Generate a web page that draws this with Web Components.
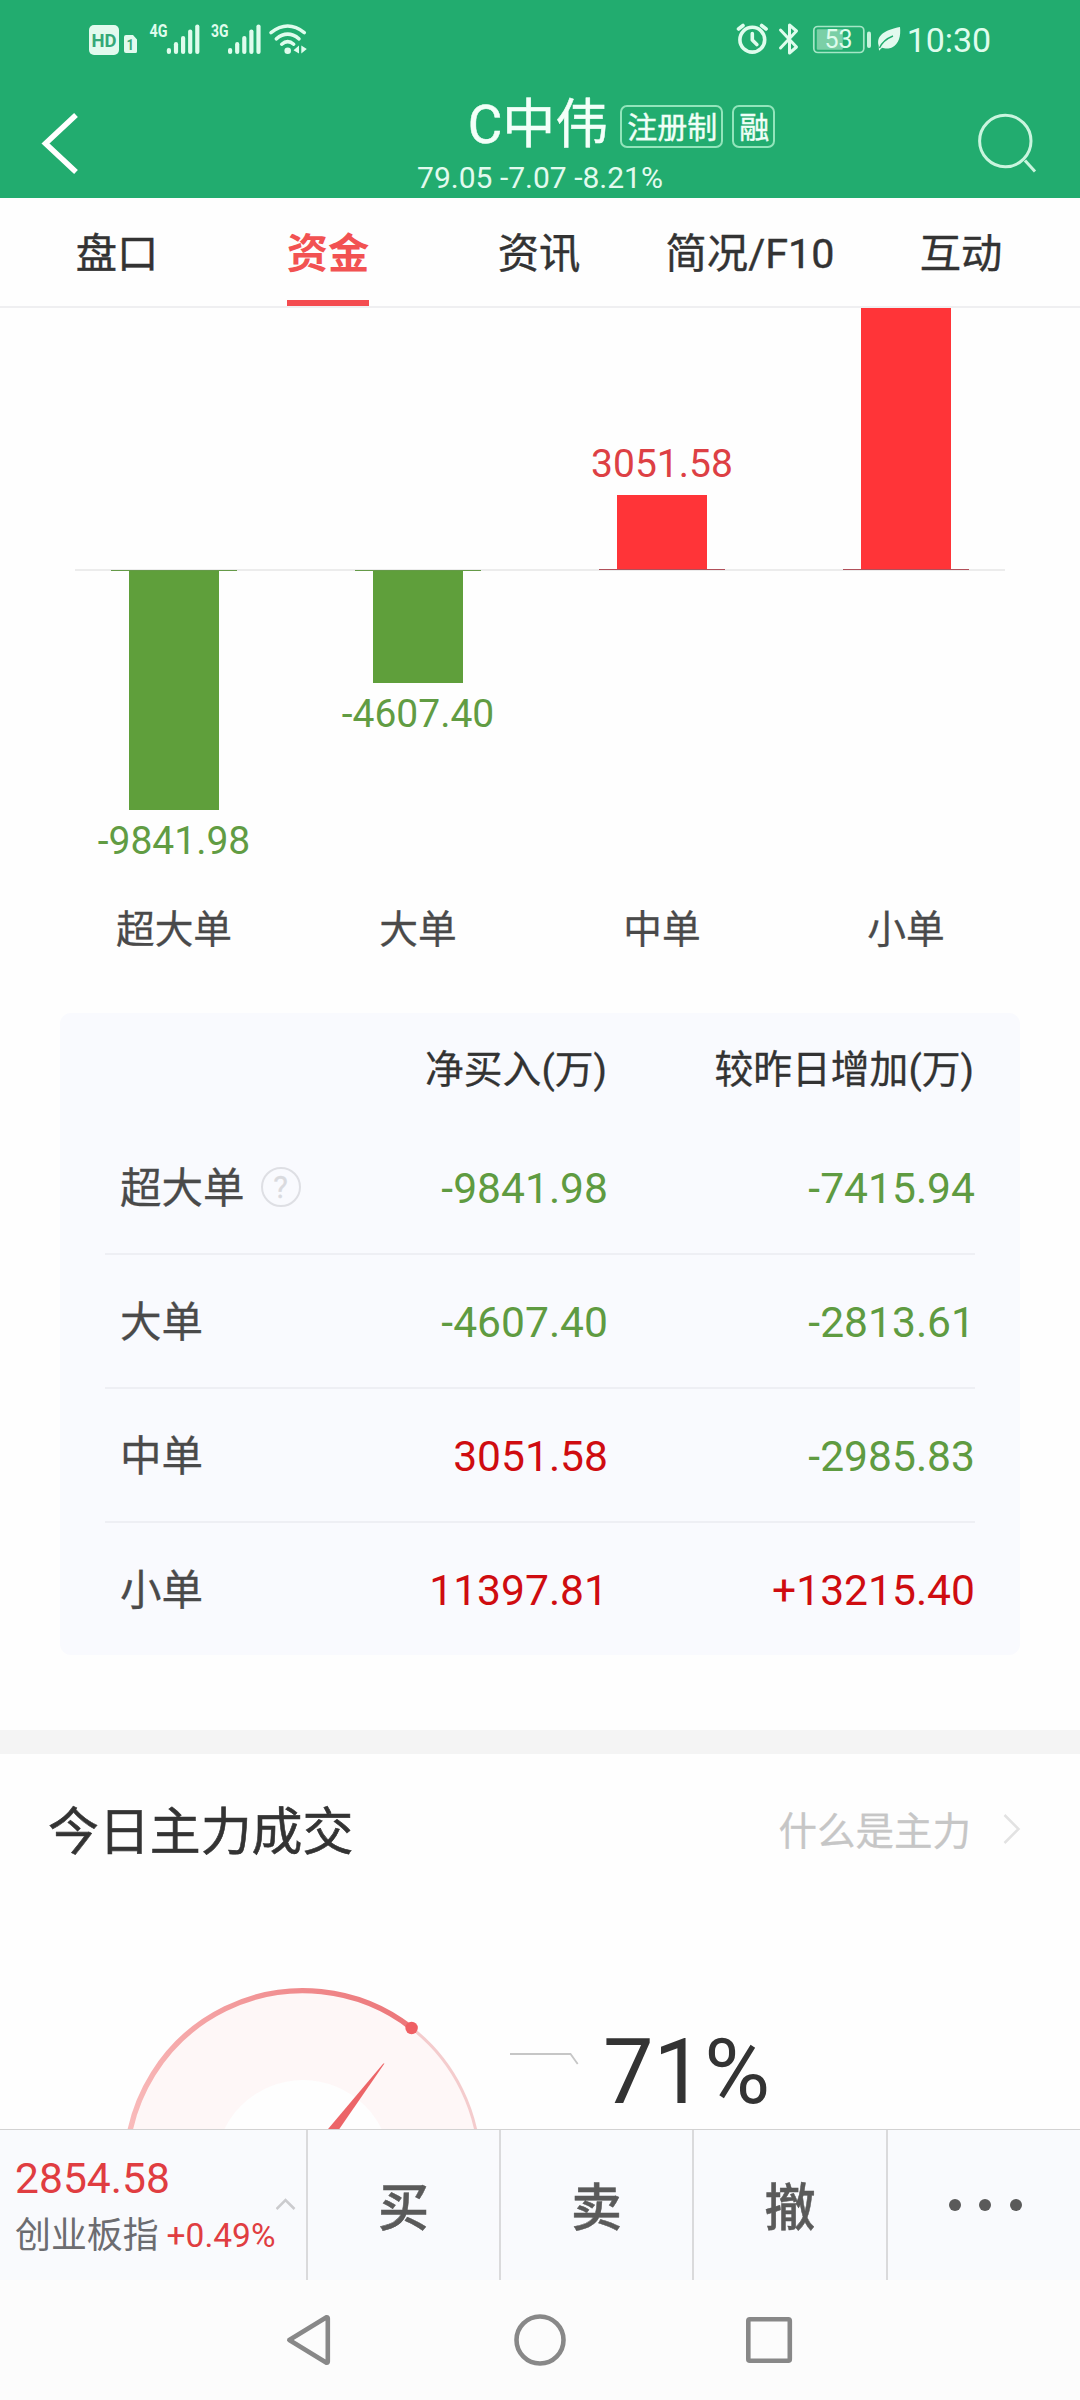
<!DOCTYPE html>
<html lang="zh-CN">
<head>
<meta charset="utf-8">
<title>C中伟 资金</title>
<style>
html,body{margin:0;padding:0;background:#fefefe}
body{width:1080px;height:2400px;overflow:hidden;font-family:Roboto,"Noto Sans CJK SC",sans-serif;color:#333}
</style>
</head>
<body>
<stock-app></stock-app>
<script>
const define = (name, css, html) => customElements.define(name, class extends HTMLElement {
  constructor() {
    super();
    const t = document.createElement('template');
    const body = typeof html === 'function' ? html(this) : html;
    t.innerHTML = `<style>*{box-sizing:border-box}:host{display:block;box-sizing:border-box}${css}</style>${body}`;
    this.attachShadow({mode: 'open'}).append(t.content.cloneNode(true));
  }
});
const attr = (el, n) => el.getAttribute(n) || '';

const signal = (x) => [48, 42.2, 36, 29.5, 24.5].map((y, i) =>
  `<path d="M${x + i * 7.1} ${y + 2}V52"/>`).join('');

define('status-bar', `:host{height:80px}svg{display:block}text{font-family:Roboto,sans-serif;fill:#dffced}`, `
<svg width="1080" height="80" viewBox="0 0 1080 80" fill="none">
  <rect x="89" y="25" width="30" height="30" rx="5" fill="#e2faee"/>
  <text x="91.4" y="46.6" font-size="19" font-weight="700" textLength="25" lengthAdjust="spacingAndGlyphs" style="fill:#35a878">HD</text>
  <path d="M126 35h7l4 4.500v12a1.500 1.500 0 0 1-1.500 1.500h-9.500a2 2 0 0 1-2-2v-14a2 2 0 0 1 2-2z" fill="#e2faee"/>
  <text x="126.600" y="49.500" font-size="15" font-weight="700" textLength="7.500" lengthAdjust="spacingAndGlyphs" style="fill:#35a878">1</text>
  <text x="149.500" y="37.300" font-size="19" font-weight="700" textLength="18" lengthAdjust="spacingAndGlyphs">4G</text>
  <text x="211" y="37.300" font-size="19" font-weight="700" textLength="17.500" lengthAdjust="spacingAndGlyphs">3G</text>
  <g stroke="#dffced" stroke-width="4.200" stroke-linecap="round">${signal(168.9)}${signal(230.1)}</g>
  <g stroke="#dffced" stroke-width="3.500" stroke-linecap="round">
    <path d="M271 32.600Q287.700 19.500 304.300 32.600M276.300 38.800Q287.700 29.500 299 38.800M281.700 44.200Q287.700 39 293.700 44.200"/>
  </g>
  <circle cx="287.700" cy="50.700" r="3.300" fill="#dffced"/>
  <path d="M299 45.500v8l-5.500-3.200zM301.300 45.500v8l5.500-4.500z" fill="#dffced"/>
  <g stroke="#dffced" stroke-width="3.600" stroke-linecap="round" stroke-linejoin="round">
    <circle cx="752.300" cy="39.700" r="12.400"/>
    <path d="M752.300 33.500v6.500l4.500 4.500M738.500 29l4.500-3.500M761.600 25.500l4.500 3.500"/>
  </g>
  <path d="M780.500 30l16 17-7 6V25l7 6-16 17" stroke="#dffced" stroke-width="3" stroke-linecap="round" stroke-linejoin="round"/>
  <rect x="813.800" y="26.500" width="50" height="26" rx="4" stroke="#a5e6c6" stroke-width="1.700"/>
  <rect x="816.800" y="29.300" width="26" height="20.500" rx="1" fill="#7bcfa6"/>
  <rect x="867" y="31.500" width="4" height="16.500" rx="2" fill="#c6f3dc"/>
  <text x="824.500" y="48.300" font-size="25">53</text>
  <path d="M900 27c1 9-1 17-8 20.500-4.500 2-8 .5-10 .3l-3 3-.3-5C876 35 885 30 900 27z" fill="#e2faee"/>
  <path d="M879.500 48Q883 40 893 36" stroke="#22ac6f" stroke-width="1.400"/>
  <text x="906.700" y="51.900" font-size="34" textLength="84.500">10:30</text>
</svg>`);

define('tag-chip', `:host{border:2px solid #92e5bb;border-radius:7px;padding:1px 4px 0 5px;height:43px;font-size:30px;line-height:40px;color:#f0fff7;-webkit-text-stroke:.4px}`, `<slot></slot>`);

define('title-bar', `
:host{height:118px;display:grid;grid-template-columns:160px 1fr 160px;color:#f3fff9}
.mid{padding-top:13px}
.row{display:grid;grid-template-columns:1fr auto 1fr;align-items:center;height:60px;margin-left:-4px}
.name{font-size:53px;line-height:60px;padding-top:2px;-webkit-text-stroke:.5px}
.tags{display:flex;gap:9px;padding:5px 0 0 12px}
.sub{margin-top:7px;text-align:center;font-size:30px;line-height:36px;color:#e2faee}
svg{display:block}`, `
<svg width="160" height="118" viewBox="0 80 160 118" fill="none"><path d="M76 115L45.500 143.500L76 172" stroke="#fff" stroke-width="5.500"/></svg>
<div class="mid"><div class="row"><i></i><div class="name"><slot></slot></div><div class="tags"><tag-chip>注册制</tag-chip><tag-chip>融</tag-chip></div></div>
<div class="sub"><slot name="sub"></slot></div></div>
<svg width="160" height="118" viewBox="920 80 160 118" fill="none" stroke="#c9f5de" stroke-width="3"><circle cx="1005.300" cy="141" r="25.700"/><path d="M1025 160.500L1035 171.500"/></svg>`);

define('tab-item', `
:host{flex:1;display:flex;flex-direction:column;align-items:center;font-size:41.300px;color:#333;-webkit-text-stroke:.4px}
.l{flex:1;line-height:90px;padding-top:11px;white-space:nowrap}
.u{height:6px;width:82px}
:host([active]){color:#f25252;font-weight:700;-webkit-text-stroke:0}
:host([active]) .u{background:#f44c50}`, `<div class="l"><slot></slot></div><div class="u"></div>`);

define('tab-strip', `:host{height:110px;display:flex;padding:0 13.500px 0 11.500px;border-bottom:2px solid #efeff1;background:#fefefe}`, `<slot></slot>`);

define('bar-column', `
:host{display:flex;flex-direction:column;align-items:center;width:244px;font-size:39px;line-height:46px}
.up{height:261px;display:flex;flex-direction:column;justify-content:flex-end;align-items:center}
.axis{height:2px;width:126px;display:flex;flex-direction:column}
.down{height:336px;display:flex;flex-direction:column;align-items:center}
.bar{width:90px}
.red{background:#ff3438}.green{background:#5f9f3b}
.cat{color:#4a4a4a;font-size:38.700px;-webkit-text-stroke:.3px}
.vr{color:#dd4044;margin-bottom:8px}.vg{color:#619c43;margin-top:8px}
.axis i{height:1px;width:126px}`, el => {
  const h = +attr(el, 'size'), v = attr(el, 'value'), up = el.hasAttribute('up');
  const bar = `<div class="bar ${up ? 'red' : 'green'}" style="height:${h}px"></div>`;
  return `<div class="up">${up ? (v ? `<div class="vr">${v}</div>` : '') + bar : ''}</div>
  <div class="axis"><i style="${up ? 'background:#b0505a' : ''}"></i><i style="${up ? '' : 'background:#659a48'}"></i></div>
  <div class="down">${up ? '' : bar + `<div class="vg">${v}</div>`}</div><div class="cat"><slot></slot></div>`;
});

define('flow-chart', `:host{display:flex;padding-left:52px;height:646px;background:linear-gradient(#ececec,#ececec) 75px 261px/930px 2px no-repeat}`, `<slot></slot>`);

define('flow-row', `
:host{display:grid;grid-template-columns:250px 253px 367px;height:134px;border-bottom:2px solid #eeeff4;align-items:center;font-size:42.600px;line-height:50px}
:host([last]){height:132px;border:0}
.n{display:flex;align-items:center;gap:16px;padding-left:15px;font-size:41.500px;color:#4a4a4a;white-space:nowrap;-webkit-text-stroke:.3px}
.n span{padding-top:3px}
.v{text-align:right;padding-top:1.500px}
.g{color:#5f9b41}.r{color:#cf0c10}
.q{width:40px;height:40px;border:2px solid #dedfe4;border-radius:50%;font-size:31px;line-height:37px;text-align:center;color:#d9dade;margin-top:-1px}`, el => {
  const v = n => `<div class="v ${attr(el, n)[0] === '-' ? 'g' : 'r'}">${attr(el, n)}</div>`;
  return `<div class="n"><span><slot></slot></span>${el.hasAttribute('help') ? '<div class="q">?</div>' : ''}</div>${v('net')}${v('delta')}`;
});

define('flow-table', `
:host{margin:59px 60px 0;height:642px;padding:0 45px;border-radius:11px;background:#f9fafe}
.h{display:grid;grid-template-columns:503px 367px;height:108px;padding-top:32px;line-height:50px;font-size:38.800px;text-align:right;color:#333;-webkit-text-stroke:.3px}
.h span{padding-right:1px}`, `<div class="h"><span>净买入(万)</span><span>较昨日增加(万)</span></div><slot></slot>`);

define('section-head', `
:host{height:182px;border-top:24px solid #f4f4f4;display:flex;align-items:center;padding:0 59px 0 48px}
.t{flex:1;font-size:50.900px;line-height:60px;color:#333;-webkit-text-stroke:.6px}
.m{font-size:38.500px;line-height:46px;color:#c6c6c6;margin-top:-3px;-webkit-text-stroke:.3px}
svg{margin:-8px 0 0 32px;display:block}`, `
<div class="t"><slot></slot></div><div class="m"><slot name="more"></slot></div>
<svg width="18" height="30" viewBox="0 0 18 30" fill="none"><path d="M1.500 1L15.500 15L1.500 29" stroke="#e2e2e2" stroke-width="2.500"/></svg>`);

define('main-gauge', `
:host{display:flex;height:217px;padding-left:100px}
svg{display:block}
.p{font-size:90px;line-height:100px;color:#333;padding-top:110.500px;margin-left:3px}`, `
<svg width="400" height="217" viewBox="100 1912 400 217" fill="none">
  <defs><linearGradient id="a" gradientUnits="userSpaceOnUse" x1="126" y1="2130" x2="412" y2="2028"><stop offset="0" stop-color="#f9bcbc"/><stop offset="1" stop-color="#ec7679"/></linearGradient></defs>
  <circle cx="303" cy="2167.400" r="176" fill="#fef7f7"/>
  <circle cx="303" cy="2167.400" r="87.400" fill="#fefefe"/>
  <path d="M411.600 2028A176.700 176.700 0 0 1 479.700 2167.400" stroke="#f4cccd" stroke-width="3"/>
  <path d="M126.300 2167.400A176.700 176.700 0 0 1 411.600 2028" stroke="url(#a)" stroke-width="5.400"/>
  <circle cx="411.600" cy="2028" r="6.200" fill="#ef5f63"/>
  <path d="M383.300 2063.500h1.200L338.600 2130H327.200z" fill="#ec6568"/>
</svg>
<svg width="100" height="217" viewBox="500 1912 100 217" fill="none"><path d="M510 2054H570.500L577.700 2064" stroke="#c6c6c6" stroke-width="1.800"/></svg>
<div class="p"><slot></slot></div>`);

define('trade-button', `
:host{flex:0 0 193px;display:flex;align-items:center;justify-content:center;border-right:2px solid #dadadc;font-size:51px;font-weight:500;line-height:60px;color:#5a5a5a;padding-top:7px;-webkit-text-stroke:.5px}
:host([wide]){flex-basis:194px}`, `<slot></slot>`);

define('index-ticker', `
:host{flex:0 0 308px;display:flex;border-right:2px solid #dadadc;padding:22px 0 0 15px}
.c{width:261px}
.v{font-size:42.600px;line-height:52px;color:#e03d41}
.n{display:flex;font-size:35.900px;line-height:44px;color:#6c6c70;margin-top:10px;gap:8px;white-space:nowrap}
.n b{font-weight:400;font-size:33.500px;color:#e03d41}
svg{display:block;margin-top:45px}`, `
<div class="c"><div class="v">2854.58</div><div class="n"><span>创业板指</span><b>+0.49%</b></div></div>
<svg width="20" height="14" viewBox="0 0 20 14" fill="none"><path d="M.500 12L9.500 3L18.500 12" stroke="#cbcbce" stroke-width="2.600"/></svg>`);

define('trade-bar', `
:host{height:151px;display:flex;background:#f9fafd;border-top:1px solid #d2d2d2}
.d{flex:1;display:flex;gap:18.300px;padding:69px 0 0 61px}
.d i{width:12px;height:12px;border-radius:50%;background:#5a5a5a;flex:none}`, `
<index-ticker></index-ticker><trade-button>买</trade-button><trade-button>卖</trade-button><trade-button wide>撤</trade-button><div class="d"><i></i><i></i><i></i></div>`);

define('nav-bar', `:host{height:120px;background:#fcfcfc}svg{display:block}`, `
<svg width="1080" height="120" viewBox="0 2280 1080 120" fill="none" stroke="#888" stroke-width="4.600" stroke-linejoin="round">
<path d="M289.300 2340L326.500 2317.300Q327.800 2317 327.800 2318.500V2361.500Q327.800 2363 326.500 2362.700Z"/>
<circle cx="540" cy="2340" r="23.500"/><rect x="748.300" y="2319.300" width="41.500" height="41.500" rx="1.500"/></svg>`);

define('stock-app', `:host{width:1080px;height:2400px;background:#fefefe}.top{background:#22ac6f;height:198px}`, `
<div class="top"><status-bar></status-bar><title-bar>C中伟<span slot="sub">79.05 -7.07 -8.21%</span></title-bar></div>
<tab-strip><tab-item>盘口</tab-item><tab-item active>资金</tab-item><tab-item>资讯</tab-item><tab-item>简况/F10</tab-item><tab-item>互动</tab-item></tab-strip>
<flow-chart>
  <bar-column size="238.500" value="-9841.98">超大单</bar-column>
  <bar-column size="111.500" value="-4607.40">大单</bar-column>
  <bar-column up size="74" value="3051.58">中单</bar-column>
  <bar-column up size="261">小单</bar-column>
</flow-chart>
<flow-table>
  <flow-row help net="-9841.98" delta="-7415.94">超大单</flow-row>
  <flow-row net="-4607.40" delta="-2813.61">大单</flow-row>
  <flow-row net="3051.58" delta="-2985.83">中单</flow-row>
  <flow-row last net="11397.81" delta="+13215.40">小单</flow-row>
</flow-table>
<section-head style="margin-top:75px">今日主力成交<span slot="more">什么是主力</span></section-head>
<main-gauge>71%</main-gauge>
<trade-bar></trade-bar>
<nav-bar></nav-bar>`);
</script>
</body>
</html>
